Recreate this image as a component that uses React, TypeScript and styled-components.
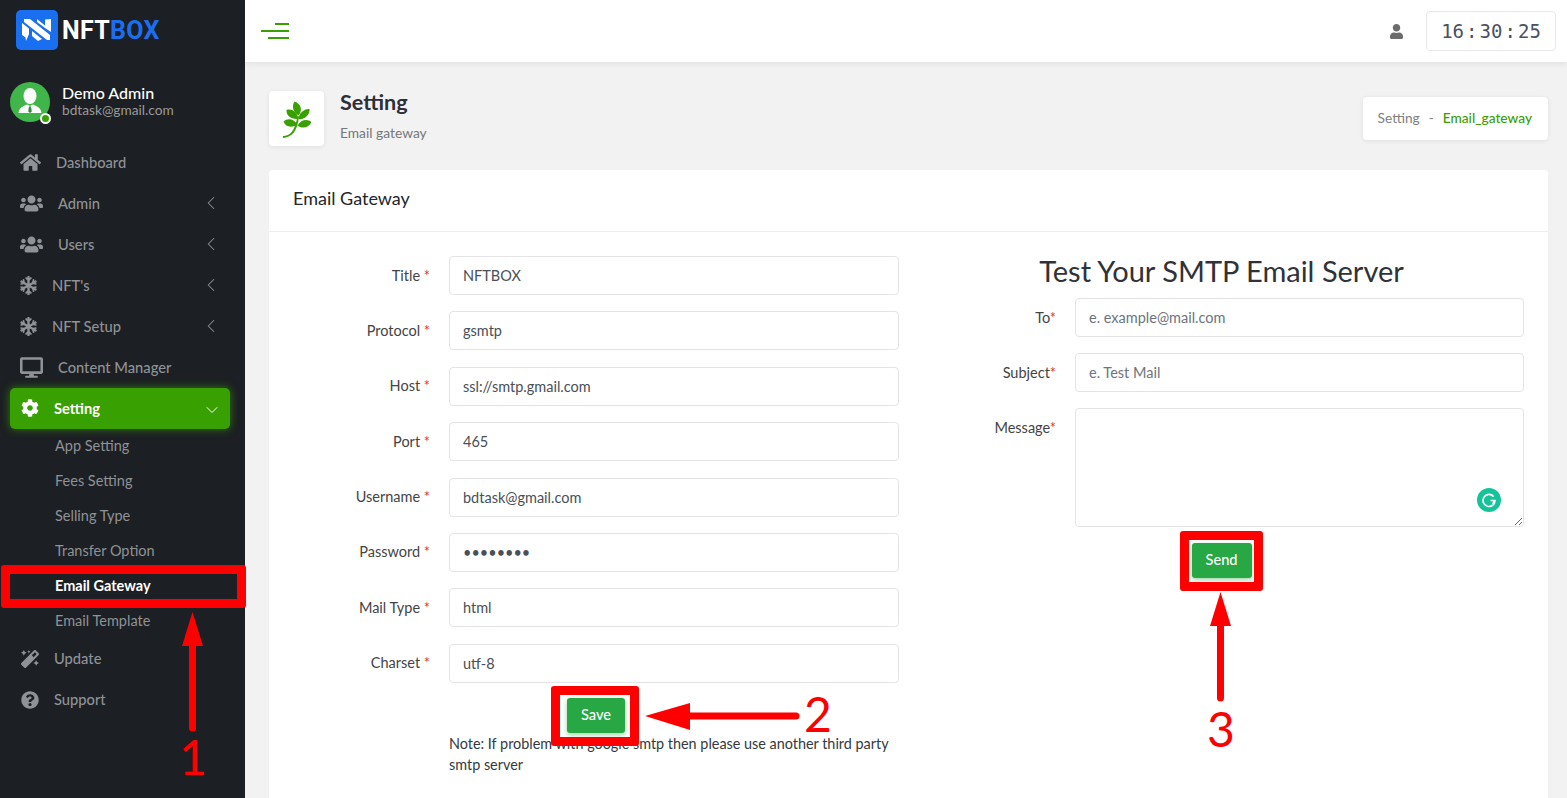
import React from 'react';
import styled, { createGlobalStyle } from 'styled-components';
import { FaCog, FaDesktop, FaHome, FaMagic, FaQuestionCircle, FaSnowflake, FaUser, FaUsers } from 'react-icons/fa';
import { ChevronDown, ChevronLeft } from 'lucide-react';

const FONT = `Lato, "Noto Sans", sans-serif`;

const GlobalStyle = createGlobalStyle`
  html, body { margin: 0; padding: 0; }
  body { width: 1567px; height: 798px; overflow: hidden; font-family: ${FONT}; background: #f2f2f2; }
  * { box-sizing: border-box; }
`;

const navItems = [
  { label: 'Dashboard', w: 21, icon: <FaHome size={21} /> },
  { label: 'Admin', w: 23, icon: <FaUsers size={23} />, arrow: true },
  { label: 'Users', w: 23, icon: <FaUsers size={23} />, arrow: true },
  { label: "NFT's", w: 17, icon: <FaSnowflake size={19} />, arrow: true },
  { label: 'NFT Setup', w: 17, icon: <FaSnowflake size={19} />, arrow: true },
  { label: 'Content Manager', w: 23, icon: <FaDesktop size={23} /> },
];

const subItems = ['App Setting', 'Fees Setting', 'Selling Type', 'Transfer Option', 'Email Gateway', 'Email Template'];

const leftFields = [
  { label: 'Title', value: 'NFTBOX' },
  { label: 'Protocol', value: 'gsmtp' },
  { label: 'Host', value: 'ssl://smtp.gmail.com' },
  { label: 'Port', value: '465' },
  { label: 'Username', value: 'bdtask@gmail.com' },
  { label: 'Password', value: '12345678', type: 'password' },
  { label: 'Mail Type', value: 'html' },
  { label: 'Charset', value: 'utf-8' },
];

const App: React.FC = () => {
  return (
    <Page>
      <GlobalStyle />
      <Sidebar>
        <LogoRow>
          <svg width="42" height="40" viewBox="0 0 42 40">
            <rect width="42" height="40" rx="5" fill="#1a6ff0" />
            <g fill="#fff">
              <path d="M8 9 H14 L34 25 V30 H31 L8 12 Z" />
              <path d="M6 13 L13 18.5 V24 L10 31 L9.5 27.5 L6 25 Z" />
              <path d="M21 9 L29 15.5 V9.5 L35 9 V22 L29 18 L21 12 Z" />
              <path d="M16 21 L26 29 L22 31 L16 26 Z" />
            </g>
          </svg>
          <LogoText>NFT<span>BOX</span></LogoText>
        </LogoRow>
        <Profile>
          <Avatar>
            <svg width="40" height="40" viewBox="0 0 40 40">
              <circle cx="20" cy="20" r="20" fill="#3fb54a" />
              <ellipse cx="20" cy="14" rx="6.5" ry="8" fill="#fff" />
              <path d="M8.5 31 C9 26.5 12 24.5 17 22.5 L20 24 L23 22.5 C28 24.5 31 26.5 31.5 31 Z" fill="#fff" />
              <path d="M19 24.5 h2 l.8 5 -1.8 1.5 -1.8 -1.5 Z" fill="#2c8f3a" />
            </svg>
            <OnlineDot />
          </Avatar>
          <ProfileText>
            <ProfileName>Demo Admin</ProfileName>
            <ProfileMail>bdtask@gmail.com</ProfileMail>
          </ProfileText>
        </Profile>
        <Nav>
          {navItems.map((item) => (
            <NavItem key={item.label}>
              <IconSlot $w={item.w}>{item.icon}</IconSlot>
              <NavLabel>{item.label}</NavLabel>
              {item.arrow && <ArrowSlot><ChevronLeft size={22} strokeWidth={1.1} /></ArrowSlot>}
            </NavItem>
          ))}
          <ActiveItem>
            <IconSlot $w={19}><FaCog size={18} /></IconSlot>
            <NavLabel>Setting</NavLabel>
            <ArrowSlot $down><ChevronDown size={20} strokeWidth={1.2} /></ArrowSlot>
          </ActiveItem>
          <SubList>
            {subItems.map((label) => (
              <SubItem key={label} $active={label === 'Email Gateway'}>{label}</SubItem>
            ))}
          </SubList>
          <NavItem><IconSlot $w={19}><FaMagic size={18} /></IconSlot><NavLabel>Update</NavLabel></NavItem>
          <NavItem><IconSlot $w={19}><FaQuestionCircle size={18} /></IconSlot><NavLabel>Support</NavLabel></NavItem>
        </Nav>
      </Sidebar>

      <Main>
        <Topbar>
          <svg width="28" height="16" viewBox="0 0 28 16">
            <path d="M14 1 H28 M0 8 H28 M7 15 H28" stroke="#38a000" strokeWidth="2" />
          </svg>
          <TopRight>
            <FaUser size={15} color="#6c6c6c" />
            <Clock>16 : 30 : 25</Clock>
          </TopRight>
        </Topbar>
        <Content>
          <PageHeader>
            <HeaderLeft>
              <IconBox>
                <svg width="44" height="46" viewBox="0 0 44 46">
                  <g fill="#38a000">
                    <path d="M19.5 5.5 C26 8 28 14 23.5 19.5 C18 16 16.5 10 19.5 5.5 Z" />
                    <path d="M11.5 14 C17 12 23 16.5 23 23 C16 23.5 11 19.5 11.5 14 Z" />
                    <path d="M34.5 13 C35 19 29.5 24 23.5 23 C24 17 29 12.5 34.5 13 Z" />
                    <path d="M8.5 25.5 C13 21.5 19.5 23 22.5 29 C16 32 10.5 31 8.5 25.5 Z" />
                    <path d="M36.5 26 C33.5 32 27 33 22.5 29.5 C26 23.5 32.5 22.5 36.5 26 Z" />
                    <path d="M8 40 C15 40 20 35 22.5 20 L24 20.5 C22.5 36 16 41.5 8 42 Z" />
                  </g>
                </svg>
              </IconBox>
              <div>
                <PageTitle>Setting</PageTitle>
                <PageSub>Email gateway</PageSub>
              </div>
            </HeaderLeft>
            <Breadcrumb>Setting<Dash>-</Dash><b>Email_gateway</b></Breadcrumb>
          </PageHeader>

          <Card>
            <CardHead>Email Gateway</CardHead>
            <CardBody>
              <div>
                {leftFields.map((f) => (
                  <FormRow key={f.label} $gap={16.4}>
                    <Label>{f.label} <i>*</i></Label>
                    <Input type={f.type || 'text'} value={f.value} readOnly />
                  </FormRow>
                ))}
                <ButtonRow $top={-1}><GreenButton>Save</GreenButton></ButtonRow>
                <Note>Note: If problem with google smtp then please use another third party smtp server</Note>
              </div>
              <div>
                <TestTitle>Test Your SMTP Email Server</TestTitle>
                <FormRow $gap={16}>
                  <Label>To<i>*</i></Label>
                  <Input placeholder="e. example@mail.com" />
                </FormRow>
                <FormRow $gap={16}>
                  <Label>Subject<i>*</i></Label>
                  <Input placeholder="e. Test Mail" />
                </FormRow>
                <TextareaRow $gap={0}>
                  <Label>Message<i>*</i></Label>
                  <TextareaWrap>
                    <Textarea />
                    <Grammarly>
                      <svg width="24" height="24" viewBox="0 0 24 24">
                        <circle cx="12" cy="12" r="12" fill="#15c39a" />
                        <path d="M16.6 8.6 A6 6 0 1 0 18 12.5 H13.5 M18 12.5 L15.5 16" fill="none" stroke="#fff" strokeWidth="1.7" />
                      </svg>
                    </Grammarly>
                  </TextareaWrap>
                </TextareaRow>
                <ButtonRow $top={16}><GreenButton>Send</GreenButton></ButtonRow>
              </div>
            </CardBody>
          </Card>
        </Content>
      </Main>

      {/* tutorial markup drawn over the screenshot */}
      <Callout $x={1} $y={565} $w={245} $h={43} />
      <Callout $x={551} $y={686} $w={88} $h={60} />
      <Callout $x={1180} $y={531} $w={83} $h={60} />
      <ArrowLayer width="1567" height="798" viewBox="0 0 1567 798">
        <g fill="#f00" stroke="#f00" strokeLinecap="round">
          <path d="M192.5 645 V728" strokeWidth="7" fill="none" />
          <path d="M192.5 612 L203 646 H182 Z" strokeWidth="0" />
          <path d="M688 716 H796" strokeWidth="7" fill="none" />
          <path d="M645 716 L690 703 V730 Z" strokeWidth="0" />
          <path d="M1220.5 625 V698" strokeWidth="7" fill="none" />
          <path d="M1220.5 592 L1231 626 H1210 Z" strokeWidth="0" />
        </g>
      </ArrowLayer>
      <StepNumber $x={179} $y={743}>1</StepNumber>
      <StepNumber $x={804} $y={700}>2</StepNumber>
      <StepNumber $x={1207} $y={715}>3</StepNumber>
    </Page>
  );
};

export default App;

// Styled components
const Page = styled.div`
  position: relative;
  display: flex;
  width: 1567px;
  height: 798px;
  overflow: hidden;
`;

const Sidebar = styled.aside`
  width: 245px;
  flex-shrink: 0;
  background: #1c1f23;
  padding-left: 10px;
  padding-right: 15px;
`;

const LogoRow = styled.div`
  display: flex;
  align-items: center;
  gap: 4px;
  height: 62px;
  padding: 0 0 2px 6px;
`;

const LogoText = styled.div`
  font-family: Roboto, sans-serif;
  font-size: 25px;
  font-weight: 700;
  letter-spacing: 0.3px;
  color: #fff;
  span { color: #1a6ff0; }
`;

const Profile = styled.div`
  display: flex;
  align-items: center;
  gap: 12px;
  margin-top: 20px;
  height: 40px;
`;

const Avatar = styled.div`
  position: relative;
  width: 40px;
  height: 40px;
  svg { display: block; }
`;

const OnlineDot = styled.span`
  position: absolute;
  right: -0.5px;
  bottom: -2px;
  width: 11px;
  height: 11px;
  border-radius: 50%;
  background: #38a000;
  border: 2px solid #fff;
`;

const ProfileText = styled.div`
  margin-top: -2px;
`;

const ProfileName = styled.div`
  font-size: 16px;
  line-height: 18px;
  font-weight: 500;
  color: #fff;
`;

const ProfileMail = styled.div`
  font-size: 13.7px;
  line-height: 16px;
  color: #9a9a9a;
`;

const Nav = styled.nav`
  margin-top: 19.5px;
`;

const NavItem = styled.div`
  display: flex;
  align-items: center;
  gap: 15px;
  height: 41px;
  padding-left: 10px;
  font-size: 14.7px;
  font-weight: 500;
  color: #8f9296;
`;

const NavLabel = styled.span`
  margin-bottom: 1px;
`;

const IconSlot = styled.span<{ $w: number }>`
  display: flex;
  justify-content: center;
  width: ${({ $w }) => $w}px;
  svg { flex-shrink: 0; }
`;

const ActiveItem = styled(NavItem)`
  background: #38a000;
  border-radius: 5px;
  color: #fff;
  font-weight: 700;
  box-shadow: 0 0 8px rgba(72, 200, 0, 0.55);
`;

const ArrowSlot = styled.span<{ $down?: boolean }>`
  display: flex;
  margin-left: auto;
  margin-right: 8px;
  margin-top: ${({ $down }) => ($down ? 4 : 0)}px;
`;

const SubList = styled.div`
  display: flex;
  flex-direction: column;
  margin-top: -0.5px;
`;

const SubItem = styled.div<{ $active?: boolean }>`
  height: 35px;
  line-height: 35px;
  padding-left: 45px;
  font-size: 14.5px;
  font-weight: ${({ $active }) => ($active ? 700 : 400)};
  color: ${({ $active }) => ($active ? '#fff' : '#8f9296')};
`;

const Main = styled.main`
  flex: 1;
  min-width: 0;
`;

const Topbar = styled.header`
  display: flex;
  align-items: center;
  justify-content: space-between;
  height: 62px;
  padding: 0 11px 0 16px;
  background: #fff;
  box-shadow: 0 2px 6px rgba(0, 0, 0, 0.07);
`;

const TopRight = styled.div`
  display: flex;
  align-items: center;
  gap: 22px;
`;

const Clock = styled.div`
  width: 130px;
  height: 40px;
  line-height: 38px;
  text-align: center;
  white-space: nowrap;
  border: 1px solid #e9e9e9;
  border-radius: 4px;
  font-family: "DejaVu Sans Mono", monospace;
  font-size: 19px;
  word-spacing: -9.4px;
  color: #4a5160;
`;

const Content = styled.div`
  padding: 29px 19px 0 24px;
`;

const PageHeader = styled.div`
  display: flex;
  align-items: center;
  justify-content: space-between;
  height: 55px;
  margin-bottom: 24px;
`;

const HeaderLeft = styled.div`
  display: flex;
  gap: 16px;
`;

const IconBox = styled.div`
  display: flex;
  align-items: center;
  justify-content: center;
  width: 55px;
  height: 55px;
  background: #fff;
  border-radius: 4px;
  box-shadow: 0 1px 5px rgba(0, 0, 0, 0.08);
`;

const PageTitle = styled.div`
  margin-top: -2px;
  font-size: 21.6px;
  line-height: 26px;
  font-weight: 700;
  color: #2b2f38;
`;

const PageSub = styled.div`
  margin-top: 10px;
  font-size: 13.8px;
  line-height: 16px;
  color: #777;
`;

const Breadcrumb = styled.div`
  display: flex;
  align-items: center;
  height: 43px;
  padding: 0 16px 2px 15px;
  background: #fff;
  border-radius: 4px;
  box-shadow: 0 1px 5px rgba(0, 0, 0, 0.08);
  font-size: 13.7px;
  color: #808080;
  b { font-weight: 500; color: #38a000; }
`;

const Dash = styled.span`
  margin: 0 9px;
`;

const Card = styled.section`
  height: 700px;
  background: #fff;
  border-radius: 4px;
`;

const CardHead = styled.div`
  height: 62px;
  line-height: 57px;
  padding-left: 24px;
  border-bottom: 1px solid #eee;
  font-size: 18px;
  color: #23262b;
`;

const CardBody = styled.div`
  display: grid;
  grid-template-columns: 606px 605px;
  column-gap: 20px;
  padding: 24px 0 0 24px;
`;

const Label = styled.label`
  margin-bottom: 1px;
  text-align: right;
  font-size: 14.5px;
  color: #444;
  i { font-style: normal; color: #e3342f; }
`;

const FormRow = styled.div<{ $gap: number }>`
  display: grid;
  grid-template-columns: 137px 1fr;
  column-gap: 19px;
  align-items: center;
  height: 39px;
  margin-bottom: ${({ $gap }) => $gap}px;
`;

const TextareaRow = styled(FormRow)`
  align-items: start;
  height: 119px;
  ${Label} { margin-top: 11px; }
`;

const Input = styled.input`
  width: 100%;
  height: 39px;
  padding: 0 13px;
  border: 1px solid #e4e4e4;
  border-radius: 4px;
  outline: none;
  font-family: ${FONT};
  font-size: 14.5px;
  color: #495057;
  &::placeholder { color: #6c757d; opacity: 1; }
`;

const TextareaWrap = styled.div`
  position: relative;
  height: 119px;
`;

const Textarea = styled.textarea`
  display: block;
  width: 100%;
  height: 119px;
  border: 1px solid #e4e4e4;
  border-radius: 4px;
  outline: none;
  resize: vertical;
`;

const Grammarly = styled.span`
  position: absolute;
  right: 23px;
  top: 80px;
  svg { display: block; }
`;

const ButtonRow = styled.div<{ $top: number }>`
  display: flex;
  justify-content: center;
  margin-top: ${({ $top }) => $top}px;
`;

const GreenButton = styled.button`
  height: 35px;
  padding: 0 14px 2px;
  border: none;
  border-radius: 3px;
  background: #28a745;
  box-shadow: 0 2px 5px rgba(40, 167, 69, 0.45);
  font-family: ${FONT};
  font-size: 14.6px;
  font-weight: 500;
  color: #fff;
`;

const Note = styled.p`
  width: 450px;
  margin: 0 0 0 156px;
  font-size: 14.4px;
  line-height: 21px;
  color: #343a40;
`;

const TestTitle = styled.h2`
  height: 42px;
  margin: -8px 0 8px;
  text-align: center;
  font-size: 29px;
  line-height: 46px;
  font-weight: 400;
  color: #2f3338;
`;

const Callout = styled.div<{ $x: number; $y: number; $w: number; $h: number }>`
  position: absolute;
  left: ${({ $x }) => $x}px;
  top: ${({ $y }) => $y}px;
  width: ${({ $w }) => $w}px;
  height: ${({ $h }) => $h}px;
  border: 9px solid #f00;
  border-radius: 3px;
`;

const ArrowLayer = styled.svg`
  position: absolute;
  left: 0;
  top: 0;
  pointer-events: none;
`;

const StepNumber = styled.div<{ $x: number; $y: number }>`
  position: absolute;
  left: ${({ $x }) => $x}px;
  top: ${({ $y }) => $y}px;
  font-family: Lato, sans-serif;
  font-size: 48px;
  line-height: 28px;
  color: #f00;
`;
